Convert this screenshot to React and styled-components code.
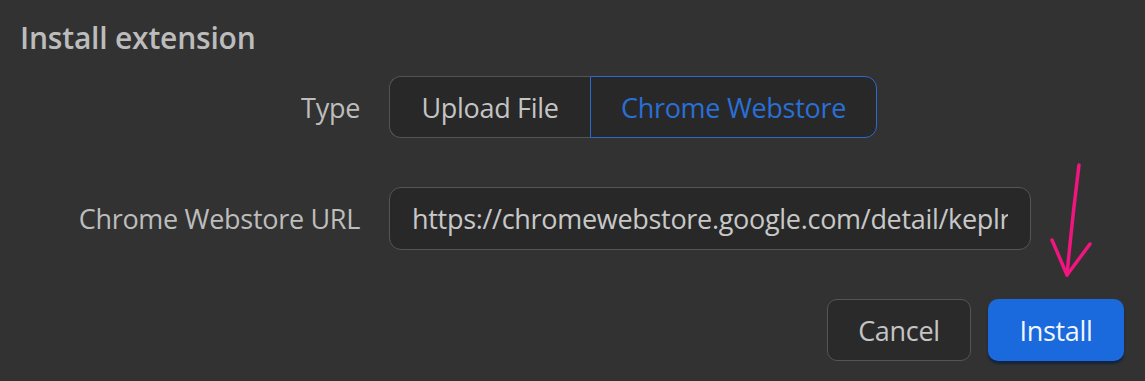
import styled, { createGlobalStyle } from "styled-components";

const Global = createGlobalStyle`
  html, body {
    margin: 0;
    background: #323232;
  }
  body {
    font-family: "Open Sans", "Noto Sans", sans-serif;
  }
`

const Page = styled.div`
  position: relative;
  width: 1145px;
  height: 381px;
  box-sizing: border-box;
  padding: 17px 21px 0 20px;
  background: #323232;
  color: #bdbdbd;
  overflow: hidden;
`
const Title = styled.h2`
  margin: 0;
  font-size: 30px;
  font-weight: 600;
  line-height: 42px;
  color: #bcbcbc;
  letter-spacing: -0.2px;
`
const Form = styled.div`
  display: grid;
  grid-template-columns: 340px 1fr;
  column-gap: 29px;
  row-gap: 49px;
  align-items: center;
  margin-top: 17px;
`
const Label = styled.div`
  text-align: right;
  font-size: 27px;
  color: #bdbdbd;
  letter-spacing: -0.3px;
`
const Segmented = styled.div`
  display: flex;
  width: max-content;
`
const Segment = styled.button`
  height: 62px;
  box-sizing: border-box;
  padding: 0;
  font-family: inherit;
  font-size: 27px;
  letter-spacing: -0.3px;
  background: #282828;
  color: ${(p) => (p.$active ? "#2a6fd6" : "#c4c4c4")};
  border: 1.5px solid ${(p) => (p.$active ? "#2b6ad0" : "#545454")};
  border-radius: ${(p) => (p.$first ? "12px 0 0 12px" : "0 12px 12px 0")};
  ${(p) => (p.$first ? "border-right: none;" : "")}
  width: ${(p) => p.$w}px;
`
const Input = styled.div`
  width: 642px;
  height: 63px;
  box-sizing: border-box;
  padding: 0 22px;
  display: flex;
  align-items: center;
  background: #282828;
  border: 1.5px solid #555;
  border-radius: 12px;
`
const Value = styled.span`
  flex: 1;
  overflow: hidden;
  white-space: nowrap;
  font-size: 27px;
  letter-spacing: -0.3px;
  color: #c8c8c8;
`
const Actions = styled.div`
  display: flex;
  justify-content: flex-end;
  gap: 17px;
  margin-top: 49px;
`
const Button = styled.button`
  height: 62px;
  box-sizing: border-box;
  font-family: inherit;
  font-size: 27px;
  letter-spacing: -0.3px;
  border-radius: 10px;
  width: ${(p) => p.$w}px;
  background: ${(p) => (p.$primary ? "#1a69dd" : "#2a2a2a")};
  color: ${(p) => (p.$primary ? "#f2f6ff" : "#c4c4c4")};
  border: ${(p) => (p.$primary ? "none" : "1.5px solid #555")};
  box-shadow: ${(p) => (p.$primary ? "0 3px 2px #14243d" : "none")};
`
const Arrow = styled.svg`
  position: absolute;
  left: 0;
  top: 0;
  pointer-events: none;
`

export default function App() {
  return (
    <Page>
      <Global />
      <Title>Install extension</Title>
      <Form>
        <Label>Type</Label>
        <Segmented>
          <Segment $first $w={201}>Upload File</Segment>
          <Segment $active $w={287}>Chrome Webstore</Segment>
        </Segmented>
        <Label>Chrome Webstore URL</Label>
        <Input>
          <Value>https://chromewebstore.google.com/detail/keplr/dmkamcknogkgcdfhhbddcghachkejeap</Value>
        </Input>
      </Form>
      <Actions>
        <Button $w={144}>Cancel</Button>
        <Button $primary $w={136}>Install</Button>
      </Actions>
      <Arrow width="1145" height="381" viewBox="0 0 1145 381">
        <g fill="none" stroke="#f0157f" strokeWidth="3.5" strokeLinecap="round" strokeLinejoin="round">
          <path d="M1079 165 Q1072 220 1067 275" />
          <path d="M1052 240 L1067 275 L1090 244" />
        </g>
      </Arrow>
    </Page>
  );
}
